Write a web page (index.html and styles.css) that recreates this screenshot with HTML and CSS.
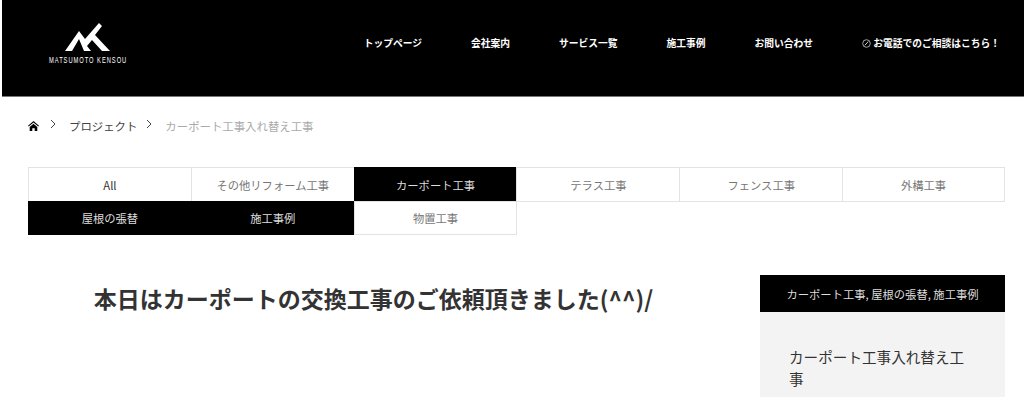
FILE: index.html
```html
<!DOCTYPE html>
<html lang="ja">
<head>
  <meta charset="UTF-8">
  <title>カーポート工事入れ替え工事</title>
  <link rel="stylesheet" href="styles.css">
</head>
<body>
  <header class="site-header">
    <a class="logo" href="#">
      <svg class="logo-mark" width="48" height="30" viewBox="0 0 48 30">
        <polygon fill="#fff" points="1,29 15,9 21,17 35,1 38,4 31,13 46,29 38,29 28,18 23,24 27,29 20,29 15,17 8,29"/>
      </svg>
      <span class="logo-text">MATSUMOTO KENSOU</span>
    </a>
    <nav class="main-nav">
      <a href="#">トップページ</a>
      <a href="#">会社案内</a>
      <a href="#">サービス一覧</a>
      <a href="#">施工事例</a>
      <a href="#">お問い合わせ</a>
      <a href="#" class="nav-tel">
        <svg width="9" height="9" viewBox="0 0 9 9"><circle cx="4.5" cy="4.5" r="3.8" fill="none" stroke="#ccc" stroke-width="0.8"/><path d="M2.8 6.4 6.2 2.6" stroke="#ccc" stroke-width="1"/></svg>
        お電話でのご相談はこちら！
      </a>
    </nav>
  </header>

  <main class="content">
    <div class="breadcrumb">
      <svg class="home-icon" width="11" height="10" viewBox="0 0 11 10">
        <path fill="#000" d="M5.5 0 0 4.8l.7.8 4.8-4.1 4.8 4.1.7-.8zM1.7 6v4h2.6V7.2h2.4V10h2.6V6L5.5 2.7z"/>
      </svg>
      <svg class="crumb-sep" width="6" height="10" viewBox="0 0 6 10"><path d="M1 1l4 4-4 4" fill="none" stroke="#444" stroke-width="1"/></svg>
      <a href="#">プロジェクト</a>
      <svg class="crumb-sep" width="6" height="10" viewBox="0 0 6 10"><path d="M1 1l4 4-4 4" fill="none" stroke="#444" stroke-width="1"/></svg>
      <span class="crumb-current">カーポート工事入れ替え工事</span>
    </div>

    <ul class="cat-tabs">
      <li><a href="#">All</a></li>
      <li><a href="#">その他リフォーム工事</a></li>
      <li class="active"><a href="#">カーポート工事</a></li>
      <li><a href="#">テラス工事</a></li>
      <li><a href="#">フェンス工事</a></li>
      <li><a href="#">外構工事</a></li>
      <li class="active"><a href="#">屋根の張替</a></li>
      <li class="active"><a href="#">施工事例</a></li>
      <li><a href="#">物置工事</a></li>
    </ul>

    <div class="project">
      <div class="project-main">
        <h1>本日はカーポートの交換工事のご依頼頂きました(^^)/</h1>
      </div>
      <aside class="project-side">
        <div class="side-cats">カーポート工事, 屋根の張替, 施工事例</div>
        <div class="side-body">カーポート工事入れ替え工事</div>
      </aside>
    </div>
  </main>
</body>
</html>
```

FILE: styles.css
```css
* {
  box-sizing: border-box;
}

body {
  margin: 0;
  background-color: #fff;
  color: #333;
  font-family: "Noto Sans CJK JP", "Noto Sans", sans-serif;
  height: 412px;
  overflow: hidden;
}

a {
  color: inherit;
  text-decoration: none;
}

.site-header {
  margin-left: 2px;
  height: 97px;
  background-color: #000;
  border-bottom: 1px solid #777;
  display: flex;
  justify-content: space-between;
  padding: 0 24px 0 47px;
}

.logo {
  width: 78px;
  padding-top: 22px;
  display: flex;
  flex-direction: column;
  align-items: center;
  color: #fff;
}

.logo-mark {
  display: block;
}

/* the logotype is a condensed face, squeeze the closest one we have */
.logo-text {
  margin-top: 3px;
  font-family: "Liberation Sans", sans-serif;
  font-size: 9px;
  line-height: 10px;
  letter-spacing: 1.5px;
  white-space: nowrap;
  transform: scaleX(0.64);
}

.main-nav {
  display: flex;
  gap: 49px;
  padding-top: 36px;
  color: #fff;
  font-size: 9.75px;
  font-weight: 700;
  line-height: 14px;
}

.nav-tel svg {
  vertical-align: -1px;
}

.content {
  padding: 0 19px 0 28px;
}

.breadcrumb {
  height: 70px;
  display: flex;
  align-items: center;
  font-size: 11.4px;
  padding-bottom: 12px;
}

.breadcrumb a {
  color: #444;
}

.home-icon {
  margin-right: 11px;
}

.crumb-sep {
  margin-right: 13px;
  margin-top: -4px;
}

.breadcrumb a + .crumb-sep {
  margin-left: 9px;
  margin-right: 13px;
}

.crumb-current {
  color: #aaa;
}

.cat-tabs {
  list-style: none;
  margin: 0;
  padding: 0;
  display: grid;
  grid-template-columns: repeat(6, 1fr);
  font-size: 11.3px;
}

.cat-tabs li {
  height: 35px;
  margin: 0 -1px -1px 0;
  border: 1px solid #e3e3e3;
  color: #777;
  background-color: #fff;
}

.cat-tabs li:nth-child(6) {
  margin-right: 0;
}

.cat-tabs li:nth-child(n+7) {
  height: 34px;
  margin-bottom: 0;
}

.cat-tabs li:first-child {
  color: #333;
}

.cat-tabs li.active {
  background-color: #000;
  border-color: #000;
  color: #ddd;
}

.cat-tabs a {
  height: 100%;
  display: flex;
  align-items: center;
  justify-content: center;
}

.project {
  margin-top: 40px;
  display: flex;
  gap: 41px;
  align-items: flex-start;
}

.project-main {
  flex: 1;
}

.project-main h1 {
  margin: 0;
  padding-top: 6px;
  text-align: center;
  font-size: 23px;
  line-height: 34px;
  font-weight: 700;
  color: #333;
}

.project-side {
  width: 245px;
  flex-shrink: 0;
}

.side-cats {
  height: 37px;
  background-color: #000;
  color: #ddd;
  font-size: 11.3px;
  display: flex;
  align-items: center;
  justify-content: center;
}

.side-body {
  height: 85px;
  padding: 34px 29px 0;
  background-color: #f3f3f3;
  color: #333;
  font-size: 14.6px;
  line-height: 22px;
}
```
